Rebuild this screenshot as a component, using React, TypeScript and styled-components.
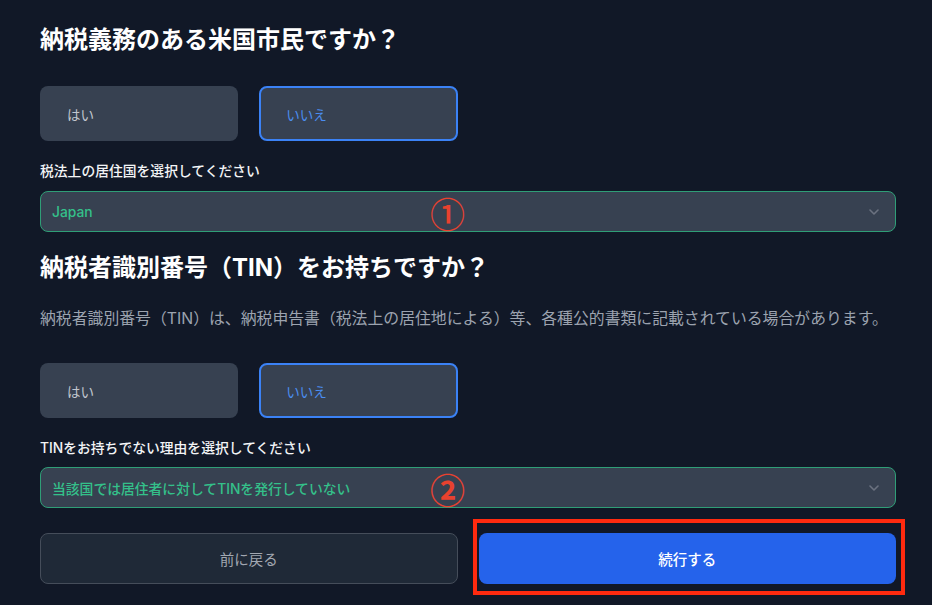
import React from "react";
import styled, { createGlobalStyle } from "styled-components";

const GlobalStyle = createGlobalStyle`
  html, body {
    margin: 0;
    padding: 0;
    background: #111827;
  }
  body {
    font-family: "Inter", "Noto Sans CJK JP", sans-serif;
    color: #f3f4f6;
    -webkit-font-smoothing: antialiased;
  }
  * { box-sizing: border-box; }
`;

const Page = styled.div`
  width: 932px;
  height: 605px;
  overflow: hidden;
  padding: 24px 36px 0 40px;
  display: flex;
  flex-direction: column;
`;

const Title = styled.h2<{ $mt?: number }>`
  margin: ${(p) => p.$mt ?? 0}px 0 0;
  font-size: 24px;
  line-height: 32px;
  font-weight: 700;
  color: #ffffff;
  font-family: "Inter", "Noto Sans CJK JP", sans-serif;
`;

const Description = styled.p`
  margin: 23px 0 0;
  font-size: 15.85px;
  line-height: 24px;
  color: #9ca3af;
  white-space: nowrap;
`;

const ChoiceGrid = styled.div<{ $mt: number }>`
  margin-top: ${(p) => p.$mt}px;
  display: grid;
  grid-template-columns: repeat(4, 1fr);
  gap: 21px;
`;

const Choice = styled.button<{ $selected?: boolean }>`
  height: 55px;
  border-radius: 8px;
  border: 2px solid ${(p) => (p.$selected ? "#3b82f6" : "transparent")};
  background: #374151;
  color: ${(p) => (p.$selected ? "#4b8ef0" : "#c2c7cf")};
  font-family: "Inter", "Noto Sans CJK JP", sans-serif;
  font-size: 13.5px;
  text-align: left;
  padding: 0 0 0 25px;
  cursor: pointer;
`;

const Label = styled.div<{ $mt?: number }>`
  margin-top: ${(p) => p.$mt ?? 20}px;
  font-size: 13.8px;
  line-height: 20px;
  font-weight: 500;
  color: #f3f4f6;
`;

const Select = styled.div<{ $mt?: number }>`
  position: relative;
  margin-top: ${(p) => p.$mt ?? 10}px;
  height: 41px;
  border: 1px solid #2f9e77;
  border-radius: 8px;
  background: #374151;
  display: flex;
  align-items: center;
  padding: 0 16px 0 11px;
`;

const SelectValue = styled.span`
  flex: 1;
  font-size: 13.8px;
  font-weight: 500;
  color: #34c08a;
`;

const Chevron = styled.svg`
  width: 10px;
  height: 6px;
  flex: none;
`;

const Marker = styled.span<{ $bold?: boolean }>`
  position: absolute;
  left: 389px;
  top: 50%;
  transform: translateY(-50%);
  font-family: "Noto Sans CJK JP", sans-serif;
  font-size: 35px;
  font-weight: ${(p) => (p.$bold ? 700 : 500)};
  line-height: 1;
  color: #e8412f;
`;

const Actions = styled.div`
  margin-top: 25px;
  display: grid;
  grid-template-columns: 1fr 1fr;
  gap: 21px;
`;

const BackButton = styled.button`
  height: 51px;
  border-radius: 8px;
  border: 1px solid #454d5a;
  background: #1f2937;
  color: #a1a7b1;
  font-family: "Inter", "Noto Sans CJK JP", sans-serif;
  font-size: 14.5px;
  cursor: pointer;
`;

const PrimaryWrap = styled.div`
  position: relative;
  display: flex;
`;

const PrimaryButton = styled.button`
  flex: 1;
  height: 51px;
  border-radius: 8px;
  border: none;
  background: #2563eb;
  color: #ffffff;
  font-family: "Inter", "Noto Sans CJK JP", sans-serif;
  font-size: 14.5px;
  font-weight: 500;
  cursor: pointer;
`;

const Highlight = styled.div`
  position: absolute;
  left: -6px;
  right: -9px;
  top: -14px;
  bottom: -11px;
  border: 4px solid #ff2a0f;
  pointer-events: none;
`;

const ChevronIcon = () => (
  <Chevron viewBox="0 0 10 6" fill="none">
    <path d="M1 1l4 4 4-4" stroke="#6b7280" strokeWidth="1.6" strokeLinecap="round" strokeLinejoin="round" />
  </Chevron>
);

export default function App() {
  return (
    <>
      <GlobalStyle />
      <Page>
        <Title>納税義務のある米国市民ですか？</Title>
        <ChoiceGrid $mt={30}>
          <Choice>はい</Choice>
          <Choice $selected>いいえ</Choice>
        </ChoiceGrid>
        <Label>税法上の居住国を選択してください</Label>
        <Select>
          <SelectValue>Japan</SelectValue>
          <Marker>①</Marker>
          <ChevronIcon />
        </Select>
        <Title $mt={20}>納税者識別番号（TIN）をお持ちですか？</Title>
        <Description>
          納税者識別番号（TIN）は、納税申告書（税法上の居住地による）等、各種公的書類に記載されている場合があります。
        </Description>
        <ChoiceGrid $mt={32}>
          <Choice>はい</Choice>
          <Choice $selected>いいえ</Choice>
        </ChoiceGrid>
        <Label>TINをお持ちでない理由を選択してください</Label>
        <Select $mt={9}>
          <SelectValue>当該国では居住者に対してTINを発行していない</SelectValue>
          <Marker $bold>②</Marker>
          <ChevronIcon />
        </Select>
        <Actions>
          <BackButton>前に戻る</BackButton>
          <PrimaryWrap>
            <PrimaryButton>続行する</PrimaryButton>
            <Highlight />
          </PrimaryWrap>
        </Actions>
      </Page>
    </>
  );
}
